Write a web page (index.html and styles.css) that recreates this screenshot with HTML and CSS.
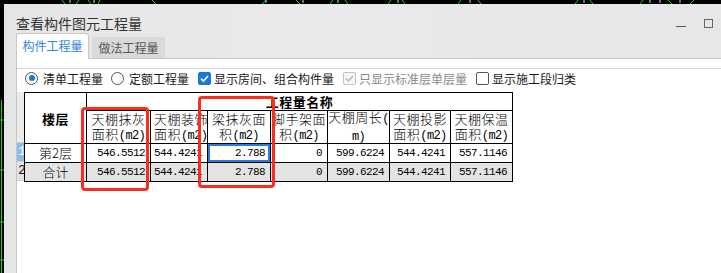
FILE: index.html
```html
<!DOCTYPE html>
<html lang="zh-CN">
<head>
<meta charset="utf-8">
<title>查看构件图元工程量</title>
<link rel="stylesheet" href="styles.css">
</head>
<body>
<svg class="cad" width="721" height="273" viewBox="0 0 721 273">
  <g stroke="#22d022" fill="none" stroke-width="1">
    <path d="M62 0 L65 4 M76 4 L79 0 M88 0 L91 4 M98 4 L100 0 M152 0 L156 4 M262 4 L266 0 M296 0 L300 4 M330 4 L333 0 M345 0 L348 4 M388 4 L391 0 M402 0 L405 4 M458 4 L461 0 M478 0 L481 4 M575 4 L578 0 M590 0 L593 4 M640 4 L643 0 M668 0 L672 4 M690 4 L694 0"/>
    <path d="M1.5 100 V273 M0 120 H4 M0 170 H4 M0 222 H4 M0 260 H4"/>
  </g>
  <g stroke="#dcdcdc" fill="none" stroke-width="1">
    <path d="M70 0 V3 M94 0 V3 M266 0 V3 M303 0 V3 M338 0 V3 M398 0 V3 M470 0 V3 M584 0 V3 M650 0 V3 M660 0 V3 M680 0 V3"/>
  </g>
</svg>

<div class="dialog">
  <div class="titlebar">
    <span class="title">查看构件图元工程量</span>
    <span class="win-min"></span>
    <span class="win-max"></span>
  </div>

  <div class="tabs">
    <div class="tab active">构件工程量</div>
    <div class="tab">做法工程量</div>
  </div>

  <div class="panel">
    <div class="options">
      <label class="opt"><span class="radio on"></span>清单工程量</label>
      <label class="opt"><span class="radio"></span>定额工程量</label>
      <label class="opt cbopt"><span class="cb on"><svg width="11" height="11" viewBox="0 0 11 11"><path d="M2 5.6 L4.4 8 L9 3" stroke="#fff" stroke-width="1.6" fill="none"/></svg></span>显示房间、组合构件量</label>
      <label class="opt cbopt disabled"><span class="cb dis"><svg width="11" height="11" viewBox="0 0 11 11"><path d="M2 5.6 L4.4 8 L9 3" stroke="#b4b4b4" stroke-width="1.4" fill="none"/></svg></span>只显示标准层单层量</label>
      <label class="opt cbopt"><span class="cb"></span>显示施工段归类</label>
    </div>

    <div class="grid-wrap">
      <div class="rownums">
        <div class="rn-head"></div>
        <div class="rn sel">1</div>
        <div class="rn">2</div>
      </div>
      <div class="qty">
        <div class="c h-floor">楼层</div>
        <div class="c h-name">工程量名称</div>

        <div class="c hd"><span>天棚抹灰</span><span>面积<i class="a">(m2)</i></span></div>
        <div class="c hd left"><span>天棚装饰</span><span>面积<i class="a">(m2)</i></span></div>
        <div class="c hd"><span>梁抹灰面</span><span>积<i class="a">(m2)</i></span></div>
        <div class="c hd"><span>脚手架面</span><span>积<i class="a">(m2)</i></span></div>
        <div class="c hd"><span>天棚周长<i class="a">(</i></span><span><i class="a">m)</i></span></div>
        <div class="c hd"><span>天棚投影</span><span>面积<i class="a">(m2)</i></span></div>
        <div class="c hd"><span>天棚保温</span><span>面积<i class="a">(m2)</i></span></div>

        <div class="c fl">第2层</div>
        <div class="c n">546.5512</div>
        <div class="c n">544.4241</div>
        <div class="c n focus">2.788</div>
        <div class="c n">0</div>
        <div class="c n">599.6224</div>
        <div class="c n">544.4241</div>
        <div class="c n">557.1146</div>

        <div class="c fl tot">合计</div>
        <div class="c n tot">546.5512</div>
        <div class="c n tot">544.4241</div>
        <div class="c n tot">2.788</div>
        <div class="c n tot">0</div>
        <div class="c n tot">599.6224</div>
        <div class="c n tot">544.4241</div>
        <div class="c n tot">557.1146</div>
      </div>
    </div>
  </div>
</div>

<div class="mark mark1"></div>
<div class="mark mark2"></div>
</body>
</html>
```

FILE: styles.css
```css
html, body {
  margin: 0;
  padding: 0;
}
body {
  width: 721px;
  height: 273px;
  overflow: hidden;
  background: #000;
  font-family: "Noto Sans CJK SC", "Noto Sans", sans-serif;
  position: relative;
}
.cad {
  position: absolute;
  left: 0;
  top: 0;
}
.dialog {
  position: relative;
  z-index: 1;
  margin: 4px 0 0 4px;
  width: 717px;
  height: 269px;
  background: linear-gradient(90deg, #e4e5e4, #e9eae9 40%, #e6e7e6);
  display: flex;
  flex-direction: column;
  overflow: hidden;
}
.titlebar {
  display: flex;
  align-items: flex-start;
  height: 29px;
  box-sizing: border-box;
  padding: 10px 8px 0 12px;
}
.title {
  font-size: 14px;
  line-height: 19px;
  color: #333;
  margin-right: auto;
}
.win-min {
  width: 10px;
  height: 1px;
  background: #555;
  margin-top: 12px;
}
.win-max {
  width: 9px;
  height: 9px;
  box-sizing: border-box;
  border: 1px solid #666;
  margin-top: 5px;
  margin-left: 18px;
}
.tabs {
  display: flex;
  align-items: flex-start;
  height: 26px;
  margin-bottom: -1px;
  padding-left: 12px;
}
.tab {
  width: 73px;
  box-sizing: border-box;
  text-align: center;
  font-size: 12px;
}
.tab.active {
  position: relative;
  z-index: 1;
  height: 26px;
  line-height: 24px;
  background: #fff;
  border: 1px solid #c8c8c8;
  border-bottom: none;
  border-radius: 3px 3px 0 0;
  color: #2f86d8;
}
.tab:not(.active) {
  margin-top: 4px;
  margin-left: 3px;
  height: 21px;
  line-height: 21px;
  background: #dadada;
  color: #555;
}
.panel {
  flex: 1;
  margin-left: 12px;
  background: #fff;
  border-top: 1px solid #c6c6c6;
  border-left: 1px solid #c6c6c6;
  padding-top: 9px;
}
.options {
  display: flex;
  align-items: center;
  gap: 8px;
  height: 19px;
  box-sizing: border-box;
  border-top: 1px solid #d4d4d4;
  padding-left: 8px;
  font-size: 12px;
  color: #1a1a1a;
  white-space: nowrap;
}
.opt {
  display: flex;
  align-items: center;
  gap: 5px;
}
.opt.cbopt {
  gap: 3px;
}
.opt.disabled {
  color: #8a8a8a;
}
.radio {
  width: 13px;
  height: 13px;
  box-sizing: border-box;
  border: 1px solid #555;
  border-radius: 50%;
  display: flex;
  align-items: center;
  justify-content: center;
}
.radio.on::after {
  content: "";
  width: 6px;
  height: 6px;
  border-radius: 50%;
  background: #1b78da;
}
.cb {
  width: 13px;
  height: 13px;
  box-sizing: border-box;
  border: 1px solid #555;
  border-radius: 2px;
  display: flex;
  align-items: center;
  justify-content: center;
  margin-left: 1px;
}
.cb.on {
  background: #1b78da;
  border-color: #1b78da;
}
.cb.dis {
  border-color: #c4c4c4;
  background: #f6f6f6;
}
.grid-wrap {
  display: flex;
  margin-top: 5px;
}
.rownums {
  width: 7px;
  overflow: hidden;
  font-family: "Liberation Mono", monospace;
  font-size: 13px;
}
.rn-head {
  height: 51px;
  box-sizing: border-box;
  background: #ebebeb;
  border-bottom: 1px solid #cfcfcf;
}
.rn {
  height: 19px;
  line-height: 18px;
  box-sizing: border-box;
  padding-left: 1px;
  background: #e2e2e2;
  color: #222;
  border-bottom: 1px solid #cfcfcf;
}
.rn.sel {
  background: #86bdef;
  color: #fff;
}
.qty {
  display: grid;
  grid-template-columns: 62px 64px 57px 63px 57px 62px 61px 62px;
  grid-template-rows: 18px 33px 19px 19px;
  border-left: 1px solid #000;
  border-top: 1px solid #000;
  font-size: 13px;
  font-weight: 300;
  color: #000;
}
.c {
  box-sizing: border-box;
  border-right: 1px solid #000;
  border-bottom: 1px solid #000;
  overflow: hidden;
  white-space: nowrap;
}
.h-floor {
  grid-row: 1 / 3;
  grid-column: 1;
  display: flex;
  align-items: center;
  justify-content: center;
  font-weight: bold;
  letter-spacing: 0.5px;
}
.h-name {
  grid-row: 1;
  grid-column: 2 / -1;
  text-align: center;
  font-weight: bold;
  line-height: 17px;
  letter-spacing: 0.5px;
}
.hd {
  display: flex;
  flex-direction: column;
  align-items: center;
  justify-content: center;
  line-height: 15px;
  letter-spacing: 0.5px;
}
.hd.left {
  align-items: flex-start;
  padding-left: 3px;
}
.a {
  font-style: normal;
  font-family: "Liberation Mono", monospace;
  font-size: 12px;
  letter-spacing: -0.6px;
}
.fl {
  text-align: center;
  line-height: 18px;
}
.n {
  text-align: right;
  padding-right: 5px;
  font-family: "Liberation Mono", monospace;
  font-size: 11px;
  font-weight: 400;
  letter-spacing: -0.6px;
  line-height: 18px;
}
.tot {
  background: #e4e4e4;
}
.focus {
  box-shadow: inset 0 0 0 2px #2a7be0;
}
.mark {
  position: absolute;
  z-index: 2;
  box-sizing: border-box;
  border: 3px solid #fd2b20;
  border-radius: 4px;
}
.mark1 {
  left: 81px;
  top: 107px;
  width: 68px;
  height: 84px;
}
.mark2 {
  left: 198px;
  top: 96px;
  width: 77px;
  height: 92px;
}
```
